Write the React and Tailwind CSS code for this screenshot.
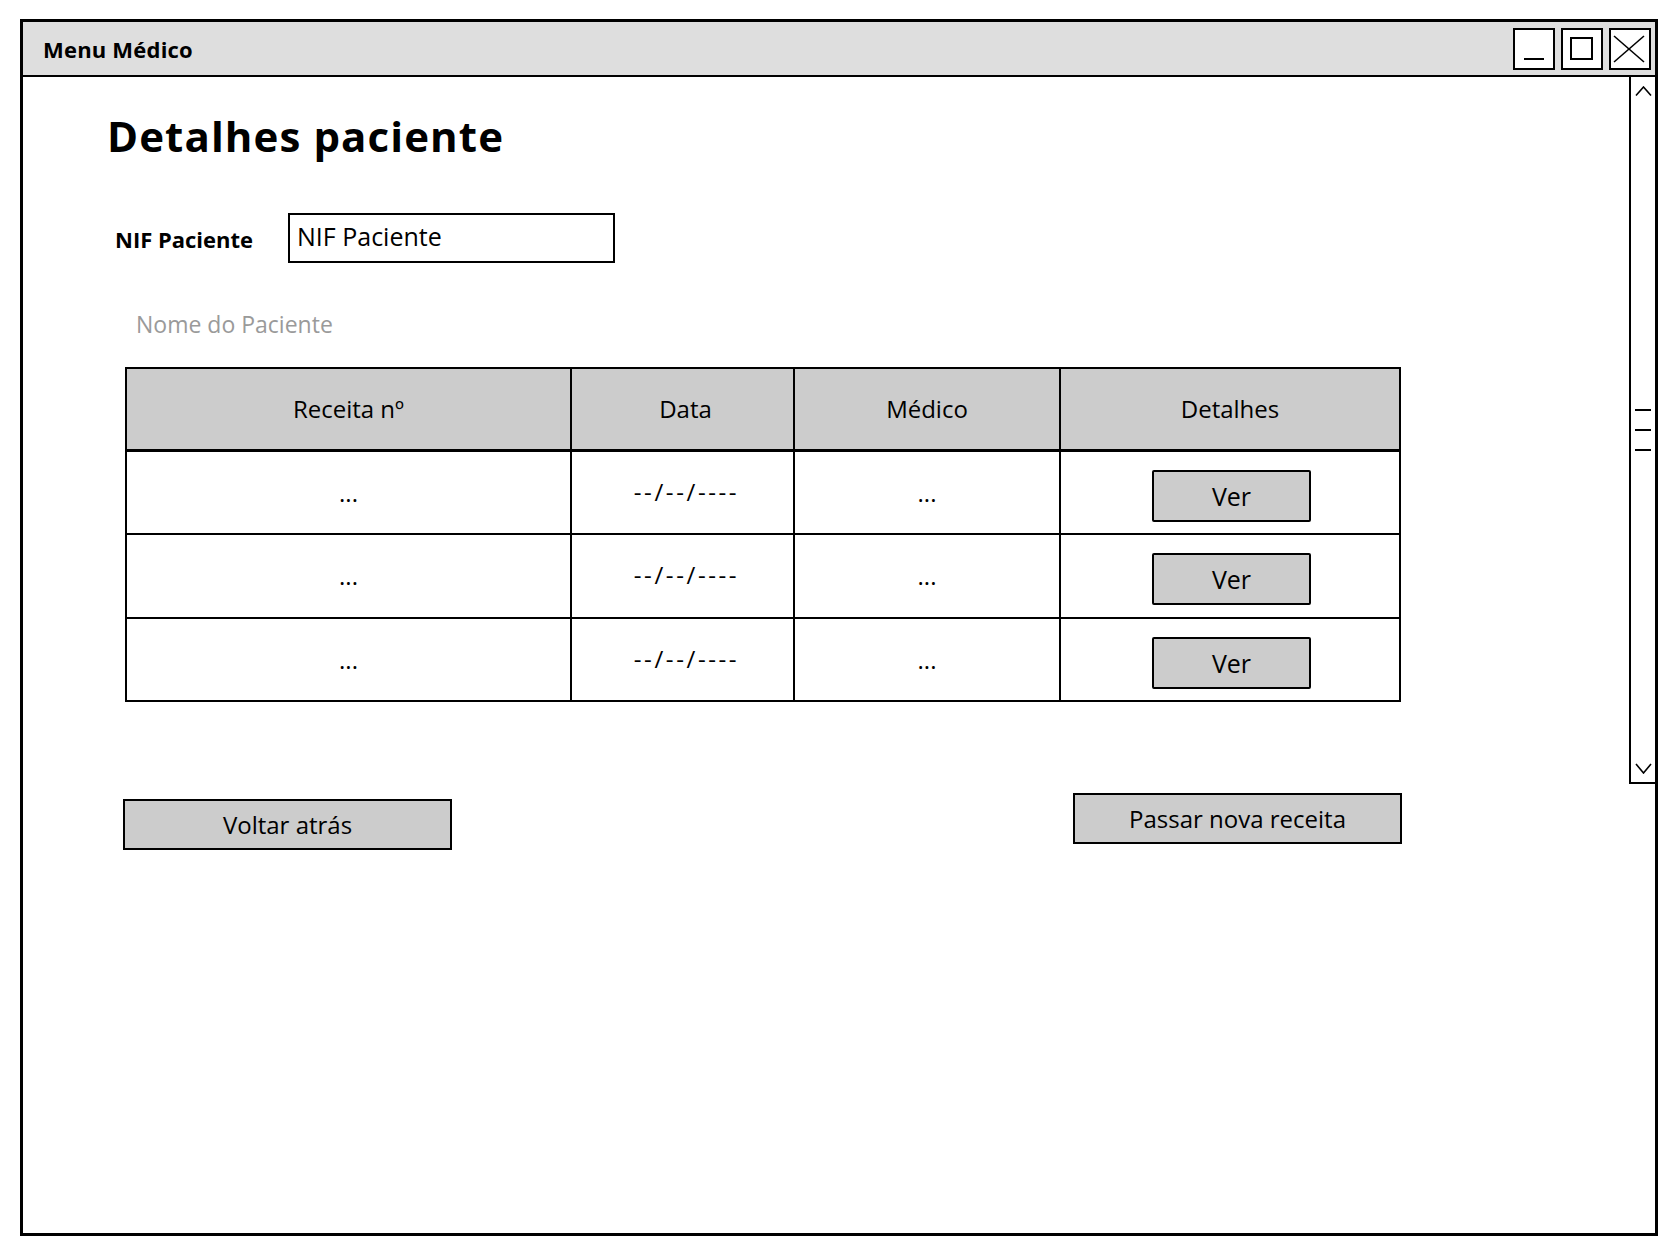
export default function App() {
  const rows = [83, 84, 83];
  return (
    <div className="w-[1676px] h-[1254px] bg-white font-['Open_Sans',sans-serif] text-black pt-[19px] pl-[20px]">
      <div className="w-[1638px] h-[1217px] border-[3px] border-black flex flex-col">
        {/* Title bar */}
        <div className="h-[55px] shrink-0 bg-[#dedede] border-b-2 border-black flex items-center justify-between pl-[20px] pr-[4px]">
          <span className="text-[22px] font-bold leading-none tracking-[0.2px]">Menu Médico</span>
          <div className="flex items-center gap-[6px]">
            <div className="w-[42px] h-[42px] border-2 border-black bg-white">
              <svg width="38" height="38" viewBox="0 0 38 38">
                <line x1="9" y1="29" x2="29" y2="29" stroke="black" strokeWidth="2" />
              </svg>
            </div>
            <div className="w-[42px] h-[42px] border-2 border-black bg-white">
              <svg width="38" height="38" viewBox="0 0 38 38">
                <rect x="8" y="8" width="21" height="21" fill="none" stroke="black" strokeWidth="2" />
              </svg>
            </div>
            <div className="w-[42px] h-[42px] border-2 border-black bg-white">
              <svg width="38" height="38" viewBox="0 0 38 38">
                <line x1="3" y1="6" x2="33" y2="32" stroke="black" strokeWidth="1.6" />
                <line x1="33" y1="6" x2="3" y2="32" stroke="black" strokeWidth="1.6" />
              </svg>
            </div>
          </div>
        </div>

        {/* Body */}
        <div className="flex flex-1">
          <div className="flex-1 flex flex-col">
            <h1 className="mt-[38px] ml-[84px] text-[42px] leading-[42px] font-bold tracking-[1.1px]">
              Detalhes paciente
            </h1>

            <div className="mt-[56px] ml-[92px] flex items-center">
              <span className="w-[173px] text-[22px] leading-none font-bold mt-[1px]">NIF Paciente</span>
              <div className="w-[327px] h-[50px] border-2 border-black flex items-center pl-[7px] pb-[4px]">
                <span className="text-[25px] leading-none">NIF Paciente</span>
              </div>
            </div>

            <div className="mt-[46px] ml-[113px] text-[23px] leading-[30px] text-[#9a9a9a]">
              Nome do Paciente
            </div>

            {/* Table */}
            <div className="mt-[28px] ml-[102px] w-[1276px] border-l-2 border-t-2 border-black grid grid-cols-[445px_223px_266px_340px]">
              {["Receita nº", "Data", "Médico", "Detalhes"].map((h, i) => (
                <div
                  key={h}
                  className={`h-[83px] bg-[#cccccc] border-r-2 border-b-[3px] border-black flex items-center justify-center text-[24px] leading-none ${i === 1 ? "pl-[6px]" : ""}`}
                >
                  {h}
                </div>
              ))}
              {rows.map((rh, i) => (
                <div key={i} className="contents">
                  <div
                    className="border-r-2 border-b-2 border-black flex items-center justify-center text-[24px] leading-none"
                    style={{ height: rh }}
                  >
                    ...
                  </div>
                  <div
                    className="border-r-2 border-b-2 border-black flex items-center justify-center text-[24px] leading-none tracking-[2.6px] pb-[2px] pl-[8px]"
                    style={{ height: rh }}
                  >
                    --/--/----
                  </div>
                  <div
                    className="border-r-2 border-b-2 border-black flex items-center justify-center text-[24px] leading-none"
                    style={{ height: rh }}
                  >
                    ...
                  </div>
                  <div
                    className="border-r-2 border-b-2 border-black flex items-start justify-center pl-[3px] pt-[18px]"
                    style={{ height: rh }}
                  >
                    <div className="w-[159px] h-[52px] bg-[#cccccc] border-2 border-black rounded-[2px] flex items-center justify-center text-[25px] leading-none">
                      Ver
                    </div>
                  </div>
                </div>
              ))}
            </div>

            {/* Bottom buttons */}
            <div className="mt-[91px] ml-[100px] w-[1279px] flex items-start justify-between">
              <div className="mt-[6px] w-[329px] h-[51px] bg-[#cccccc] border-2 border-black flex items-center justify-center text-[24px] leading-none">
                Voltar atrás
              </div>
              <div className="w-[329px] h-[51px] bg-[#cccccc] border-2 border-black flex items-center justify-center text-[24px] leading-none">
                Passar nova receita
              </div>
            </div>
          </div>

          {/* Scrollbar */}
          <div className="w-[26px] h-[707px] shrink-0 border-l-2 border-b-2 border-black flex flex-col items-center">
            <svg className="mt-[9px]" width="17" height="10" viewBox="0 0 17 10">
              <polyline points="1,9.5 8.5,1 16,9.5" fill="none" stroke="black" strokeWidth="1.6" />
            </svg>
            <div className="mt-[313px] flex flex-col gap-[18px]">
              <div className="w-[16px] h-[2px] bg-black" />
              <div className="w-[16px] h-[2px] bg-black" />
              <div className="w-[16px] h-[2px] bg-black" />
            </div>
            <div className="flex-1" />
            <svg className="mb-[8px]" width="17" height="11" viewBox="0 0 17 11">
              <polyline points="1,1 8.5,10 16,1" fill="none" stroke="black" strokeWidth="1.6" />
            </svg>
          </div>
        </div>
      </div>
    </div>
  );
}
